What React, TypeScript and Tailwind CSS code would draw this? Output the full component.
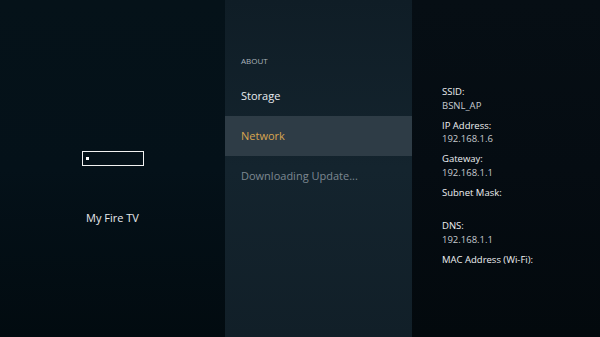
const info = [
  { label: 'SSID:', value: 'BSNL_AP' },
  { label: 'IP Address:', value: '192.168.1.6' },
  { label: 'Gateway:', value: '192.168.1.1' },
  { label: 'Subnet Mask:', value: '' },
  { label: 'DNS:', value: '192.168.1.1' },
  { label: 'MAC Address (Wi-Fi):', value: '' },
]

const MenuRow = (props: { label: string; active?: boolean; muted?: boolean }) => {
  return (
    <div
      className={
        props.active
          ? 'h-[40px] flex items-center pl-4 bg-[#2e3c46] text-[#d9a650]'
          : props.muted
            ? 'h-[40px] flex items-center pl-4 text-[#7d8891]'
            : 'h-[40px] flex items-center pl-4 text-[#e8ecef]'
      }
    >
      <p className="text-[11px] leading-[14px]">{props.label}</p>
    </div>
  )
}

export default function App() {
  return (
    <div
      className="flex w-[600px] h-[337px] overflow-hidden"
      style={{ fontFamily: '"Open Sans", "Liberation Sans", sans-serif' }}
    >
      <div className="w-[225px] h-full flex flex-col items-center pt-[151px] bg-gradient-to-b from-[#051219] via-[#041119] to-[#020b10]">
        <div className="w-[62px] h-[15px] border-[1.5px] border-[#f2f2f2] flex items-center pl-[3px]">
          <div className="w-[3px] h-[3px] bg-white"></div>
        </div>
        <p className="mt-[45px] text-[11px] leading-[14px] text-[#e6e9ec]">My Fire TV</p>
      </div>

      <div className="w-[187px] h-full flex flex-col pt-[56px] bg-gradient-to-b from-[#0f1d26] via-[#14242e] to-[#111f28]">
        <p className="pl-4 text-[8px] leading-[10px] text-[#aab3ba]">ABOUT</p>
        <div className="mt-[10px] flex flex-col">
          <MenuRow label="Storage" />
          <MenuRow label="Network" active />
          <MenuRow label="Downloading Update..." muted />
        </div>
      </div>

      <div className="flex-1 h-full pl-[30px] pt-[85px] bg-gradient-to-b from-[#060e14] via-[#050c12] to-[#03090d]">
        <div className="flex flex-col gap-[6.5px]">
          {info.map((row) => (
            <div key={row.label} className="flex flex-col">
              <p className="text-[9.5px] leading-[13.5px] font-medium text-[#eef0f2]">{row.label}</p>
              {row.label !== 'MAC Address (Wi-Fi):' && (
                <p className="h-[13.5px] text-[9.5px] leading-[13.5px] text-[#c5cacf]">{row.value}</p>
              )}
            </div>
          ))}
        </div>
      </div>
    </div>
  )
}
